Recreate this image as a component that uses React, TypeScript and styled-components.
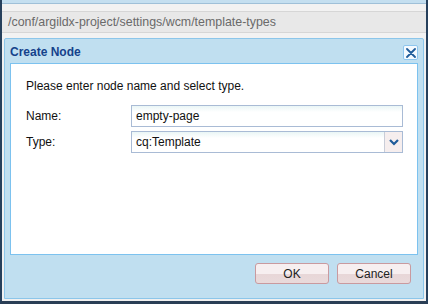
import styled, { createGlobalStyle } from "styled-components";

const Global = createGlobalStyle`
  html, body {
    margin: 0;
    padding: 0;
    background: #ffffff;
  }
`;

const App = () => {
  return (
    <>
      <Global />
      <Frame>
        <TopStrip />
        <PathArea>
          <PathBar>/conf/argildx-project/settings/wcm/template-types</PathBar>
        </PathArea>
        <Dialog>
          <Header>
            <Title>Create Node</Title>
            <CloseButton>
              <svg width="10" height="10" viewBox="0 0 10 10">
                <path
                  d="M1 1 L9 9 M9 1 L1 9"
                  stroke="#1f5c9a"
                  strokeWidth="1.8"
                  strokeLinecap="round"
                />
              </svg>
            </CloseButton>
          </Header>
          <Body>
            <Intro>Please enter node name and select type.</Intro>
            <Row>
              <Label>Name:</Label>
              <Field>empty-page</Field>
            </Row>
            <Row>
              <Label>Type:</Label>
              <Combo>
                <ComboText>cq:Template</ComboText>
                <Trigger>
                  <svg width="10" height="7" viewBox="0 0 10 7">
                    <path
                      d="M1 1 L5 5 L9 1"
                      stroke="#1f5c9a"
                      strokeWidth="2.2"
                      fill="none"
                    />
                  </svg>
                </Trigger>
              </Combo>
            </Row>
          </Body>
          <Footer>
            <Button>OK</Button>
            <Button>Cancel</Button>
          </Footer>
        </Dialog>
      </Frame>
    </>
  );
};

export default App;

const Frame = styled.div`
  width: 428px;
  height: 304px;
  box-sizing: border-box;
  border-left: 2px solid #26405c;
  border-right: 2px solid #26405c;
  border-bottom: 3px solid #2a3e55;
  background: #f0f0f0;
  display: flex;
  flex-direction: column;
  font-family: "DejaVu Sans", "Liberation Sans", sans-serif;
  overflow: hidden;
`;

const TopStrip = styled.div`
  height: 3px;
  background: #c4dff0;
  border-bottom: 1px solid #9fc0d8;
`;

const PathArea = styled.div`
  padding: 7px 0 5px 0;
  background: #f2f2f2;
`;

const PathBar = styled.div`
  height: 22px;
  box-sizing: border-box;
  border-top: 1px solid #d6d6d6;
  border-bottom: 1px solid #d6d6d6;
  background: #e8e8e8;
  color: #6a6a6a;
  font-family: "Liberation Sans", sans-serif;
  font-size: 12.4px;
  line-height: 21px;
  padding-left: 6px;
  white-space: nowrap;
`;

const Dialog = styled.div`
  flex: 1;
  margin: 0 2px 2px 2px;
  border: 1px solid #8cc6ea;
  border-radius: 2px 2px 0 0;
  background: #c0dff0;
  display: flex;
  flex-direction: column;
  padding: 0 5px 0 5px;
`;

const Header = styled.div`
  height: 23px;
  display: flex;
  align-items: center;
  justify-content: space-between;
  padding-top: 1px;
`;

const Title = styled.div`
  font-family: "Liberation Sans", sans-serif;
  font-weight: bold;
  font-size: 12px;
  color: #15428b;
`;

const CloseButton = styled.div`
  width: 15px;
  height: 15px;
  box-sizing: border-box;
  border: 1px solid #8ec6ee;
  border-radius: 2px;
  background: #f4faff;
  display: flex;
  align-items: center;
  justify-content: center;
  margin-top: 2px;
`;

const Body = styled.div`
  height: 192px;
  box-sizing: border-box;
  background: #ffffff;
  border: 1px solid #7cc2ef;
  padding: 15px 14px 0 15px;
  display: flex;
  flex-direction: column;
`;

const Intro = styled.div`
  font-family: "Liberation Sans", sans-serif;
  font-size: 12px;
  color: #111;
  margin-bottom: 12px;
`;

const Row = styled.div`
  display: flex;
  align-items: center;
  height: 22px;
  margin-bottom: 4px;
`;

const Label = styled.div`
  width: 105px;
  font-family: "Liberation Sans", sans-serif;
  font-size: 12px;
  color: #111;
`;

const Field = styled.div`
  flex: 1;
  height: 22px;
  box-sizing: border-box;
  border: 1px solid #a9bbd5;
  background: linear-gradient(#eaf6f6, #ffffff 6px);
  font-family: "Liberation Sans", sans-serif;
  font-size: 12px;
  color: #111;
  line-height: 20px;
  padding-left: 4px;
`;

const Combo = styled.div`
  flex: 1;
  height: 22px;
  box-sizing: border-box;
  border: 1px solid #a9bbd5;
  background: linear-gradient(#eaf6f6, #ffffff 6px);
  display: flex;
`;

const ComboText = styled.div`
  flex: 1;
  font-family: "Liberation Sans", sans-serif;
  font-size: 12px;
  color: #111;
  line-height: 20px;
  padding-left: 4px;
`;

const Trigger = styled.div`
  width: 17px;
  border-left: 1px solid #c9cdd8;
  background: #f6eeee;
  display: flex;
  align-items: center;
  justify-content: center;
`;

const Footer = styled.div`
  flex: 1;
  display: flex;
  justify-content: flex-end;
  align-items: flex-start;
  gap: 8px;
  padding-top: 8px;
  padding-right: 7px;
`;

const Button = styled.div`
  width: 74px;
  height: 21px;
  box-sizing: border-box;
  border: 1px solid #c99a9f;
  border-radius: 3px;
  background: linear-gradient(#f7eff0 0, #f7eff0 55%, #e8d7d8 55%, #e9dadb 100%);
  font-family: "Liberation Sans", sans-serif;
  font-size: 12px;
  color: #222;
  display: flex;
  align-items: center;
  justify-content: center;
`;
